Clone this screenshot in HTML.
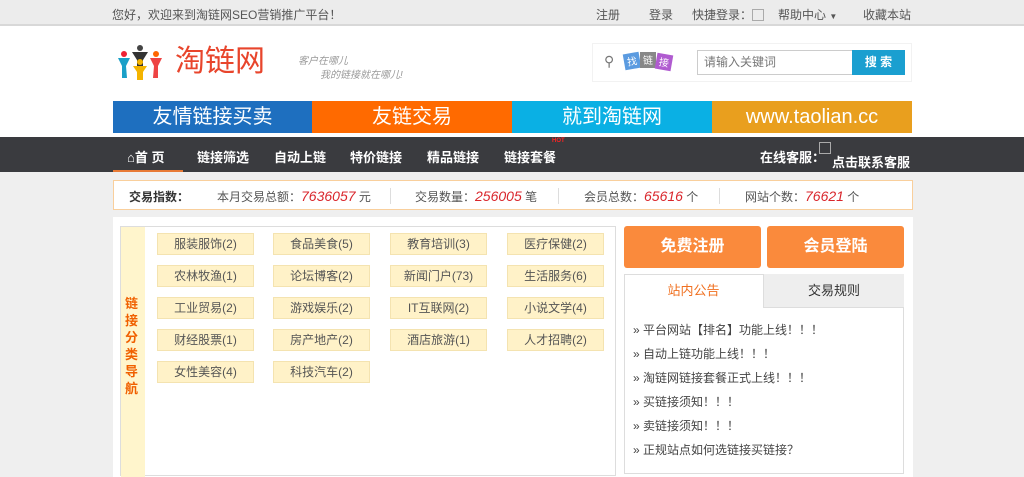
<!DOCTYPE html>
<html><head><meta charset="utf-8"><style>
*{margin:0;padding:0;box-sizing:border-box}
body{width:1024px;height:468px;overflow:hidden;background:#efefef;font-family:"Liberation Sans","Noto Sans CJK SC",sans-serif;font-size:12px;color:#555;position:relative}
.a{position:absolute;white-space:nowrap}
.top{left:0;top:0;width:1024px;height:26px;background:#ececec;border-bottom:2px solid #d8d8d8}
.head{left:0;top:26px;width:1024px;height:111px;background:#fff}
.ban{top:101px;height:32px;color:#fff;font-size:20px;text-align:center;line-height:32px}
.nav{left:0;top:137px;width:1024px;height:35px;background:#3a3b3f}
.nv{top:147px;color:#fff;font-weight:bold;font-size:13px}
.cat{width:97px;height:22px;background:#fff2c8;border:1px solid #f4e3b0;text-align:center;line-height:20px;color:#555}
.li{left:633px;font-size:12px;color:#444}
</style></head><body>
<div class="a top"></div>
<div class="a" style="left:112px;top:6px">您好，欢迎来到淘链网SEO营销推广平台！</div>
<div class="a" style="left:596px;top:6px">注册</div>
<div class="a" style="left:649px;top:6px">登录</div>
<div class="a" style="left:692px;top:6px">快捷登录：<span style="display:inline-block;width:12px;height:12px;border:1px solid #aaa;vertical-align:-2px"></span></div>
<div class="a" style="left:778px;top:6px">帮助中心 <span style="font-size:8px">▼</span></div>
<div class="a" style="left:863px;top:6px">收藏本站</div>
<div class="a head"></div>
<svg class="a" style="left:116px;top:44px" width="48" height="36" viewBox="0 0 48 36">
<circle cx="8" cy="10" r="3" fill="#e23"/><path d="M2 14 L14 14 L10 22 L11 34 L6 34 L6 22Z" fill="#1aa0c8"/>
<circle cx="24" cy="4" r="3" fill="#444"/><path d="M16 8 L32 8 L27 16 L27 26 L21 26 L21 16Z" fill="#333"/>
<circle cx="24" cy="18" r="3" fill="#f4b400"/><path d="M17 22 L31 22 L27 28 L27 36 L21 36 L21 28Z" fill="#f4b400"/>
<circle cx="40" cy="10" r="3" fill="#f60"/><path d="M34 14 L46 14 L42 22 L42 34 L37 34 L38 22Z" fill="#e44"/></svg>
<div class="a" style="left:175px;top:44px;font-size:30px;color:#e8452c;line-height:36px">淘链网</div>
<div class="a" style="left:298px;top:52px;font-size:10px;color:#999;font-style:italic">客户在哪儿</div>
<div class="a" style="left:320px;top:66px;font-size:10px;color:#999;font-style:italic">我的链接就在哪儿!</div>
<div class="a" style="left:592px;top:43px;width:320px;height:39px;border:1px solid #f2f2f2"></div>
<div class="a" style="left:604px;top:53px;font-size:14px;color:#777">&#9906;</div>
<div class="a" style="left:624px;top:53px;width:16px;height:16px;background:#5b9be0;color:#fff;font-size:10px;text-align:center;transform:rotate(-10deg)">找</div>
<div class="a" style="left:640px;top:52px;width:16px;height:16px;background:#888;color:#fff;font-size:10px;text-align:center">链</div>
<div class="a" style="left:656px;top:54px;width:16px;height:16px;background:#b05bd0;color:#fff;font-size:10px;text-align:center;transform:rotate(10deg)">接</div>
<div class="a" style="left:697px;top:50px;width:156px;height:25px;border:1px solid #ccc;padding-left:6px;line-height:23px;color:#777;font-size:12px">请输入关键词</div>
<div class="a" style="left:852px;top:50px;width:53px;height:25px;background:#1a9fd0;color:#fff;font-weight:bold;text-align:center;line-height:25px">搜 索</div>
<div class="a ban" style="left:113px;width:199px;background:#1e6fbf">友情链接买卖</div>
<div class="a ban" style="left:312px;width:200px;background:#ff6a00">友链交易</div>
<div class="a ban" style="left:512px;width:200px;background:#0ab0e4">就到淘链网</div>
<div class="a ban" style="left:712px;width:200px;background:#e99f1e">www.taolian.cc</div>
<div class="a nav"></div>
<div class="a" style="left:113px;top:170px;width:70px;height:2px;background:#e87a36"></div>
<div class="a nv" style="left:127px">&#8962;首 页</div>
<div class="a nv" style="left:197px">链接筛选</div>
<div class="a nv" style="left:274px">自动上链</div>
<div class="a nv" style="left:350px">特价链接</div>
<div class="a nv" style="left:427px">精品链接</div>
<div class="a nv" style="left:504px">链接套餐</div>
<div class="a" style="left:552px;top:138px;color:#f22;font-size:6px;font-weight:bold">HOT</div>
<div class="a nv" style="left:760px">在线客服：</div>
<div class="a" style="left:819px;top:142px;width:12px;height:12px;border:1px solid #aaa"></div>
<div class="a nv" style="left:832px;top:152px">点击联系客服</div>
<div class="a" style="left:113px;top:180px;width:800px;height:30px;background:#fff;border:1px solid #f9cf9c"></div>
<div class="a" style="left:129px;top:188px;font-weight:bold;color:#333">交易指数：</div>
<div class="a" style="left:217px;top:188px">本月交易总额：<i style="color:#d9262c;font-size:14px">7636057</i> 元</div>
<div class="a" style="left:390px;top:188px;width:1px;height:16px;background:#ddd"></div>
<div class="a" style="left:415px;top:188px">交易数量：<i style="color:#d9262c;font-size:14px">256005</i> 笔</div>
<div class="a" style="left:558px;top:188px;width:1px;height:16px;background:#ddd"></div>
<div class="a" style="left:584px;top:188px">会员总数：<i style="color:#d9262c;font-size:14px">65616</i> 个</div>
<div class="a" style="left:719px;top:188px;width:1px;height:16px;background:#ddd"></div>
<div class="a" style="left:745px;top:188px">网站个数：<i style="color:#d9262c;font-size:14px">76621</i> 个</div>
<div class="a" style="left:113px;top:217px;width:800px;height:260px;background:#fff"></div>
<div class="a" style="left:120px;top:226px;width:496px;height:250px;border:1px solid #ddd"></div>
<div class="a" style="left:121px;top:227px;width:24px;height:250px;background:#fff5cc"></div>
<div class="a" style="left:125px;top:295px;width:16px;color:#f06000;font-weight:bold;font-size:13px;line-height:17px;white-space:normal">链接分类导航</div>
<div class="a cat" style="left:157px;top:233px">服装服饰(2)</div>
<div class="a cat" style="left:273px;top:233px">食品美食(5)</div>
<div class="a cat" style="left:390px;top:233px">教育培训(3)</div>
<div class="a cat" style="left:507px;top:233px">医疗保健(2)</div>
<div class="a cat" style="left:157px;top:265px">农林牧渔(1)</div>
<div class="a cat" style="left:273px;top:265px">论坛博客(2)</div>
<div class="a cat" style="left:390px;top:265px">新闻门户(73)</div>
<div class="a cat" style="left:507px;top:265px">生活服务(6)</div>
<div class="a cat" style="left:157px;top:297px">工业贸易(2)</div>
<div class="a cat" style="left:273px;top:297px">游戏娱乐(2)</div>
<div class="a cat" style="left:390px;top:297px">IT互联网(2)</div>
<div class="a cat" style="left:507px;top:297px">小说文学(4)</div>
<div class="a cat" style="left:157px;top:329px">财经股票(1)</div>
<div class="a cat" style="left:273px;top:329px">房产地产(2)</div>
<div class="a cat" style="left:390px;top:329px">酒店旅游(1)</div>
<div class="a cat" style="left:507px;top:329px">人才招聘(2)</div>
<div class="a cat" style="left:157px;top:361px">女性美容(4)</div>
<div class="a cat" style="left:273px;top:361px">科技汽车(2)</div>
<div class="a" style="left:624px;top:226px;width:137px;height:42px;background:#fa8a3c;border-radius:3px;color:#fff;font-weight:bold;font-size:16px;text-align:center;line-height:42px">免费注册</div>
<div class="a" style="left:767px;top:226px;width:137px;height:42px;background:#fa8a3c;border-radius:3px;color:#fff;font-weight:bold;font-size:16px;text-align:center;line-height:42px">会员登陆</div>
<div class="a" style="left:624px;top:274px;width:280px;height:200px;border:1px solid #ddd"></div>
<div class="a" style="left:763px;top:274px;width:141px;height:34px;background:#eee;border-left:1px solid #ddd;border-bottom:1px solid #ddd;text-align:center;line-height:34px;font-size:13px;color:#333">交易规则</div>
<div class="a" style="left:624px;top:274px;width:139px;height:34px;text-align:center;line-height:34px;font-size:13px;color:#f07020">站内公告</div>
<div class="a li" style="top:321px">» 平台网站【排名】功能上线！！！</div>
<div class="a li" style="top:345px">» 自动上链功能上线！！！</div>
<div class="a li" style="top:369px">» 淘链网链接套餐正式上线！！！</div>
<div class="a li" style="top:393px">» 买链接须知！！！</div>
<div class="a li" style="top:417px">» 卖链接须知！！！</div>
<div class="a li" style="top:441px">» 正规站点如何选链接买链接？</div>
</body></html>
